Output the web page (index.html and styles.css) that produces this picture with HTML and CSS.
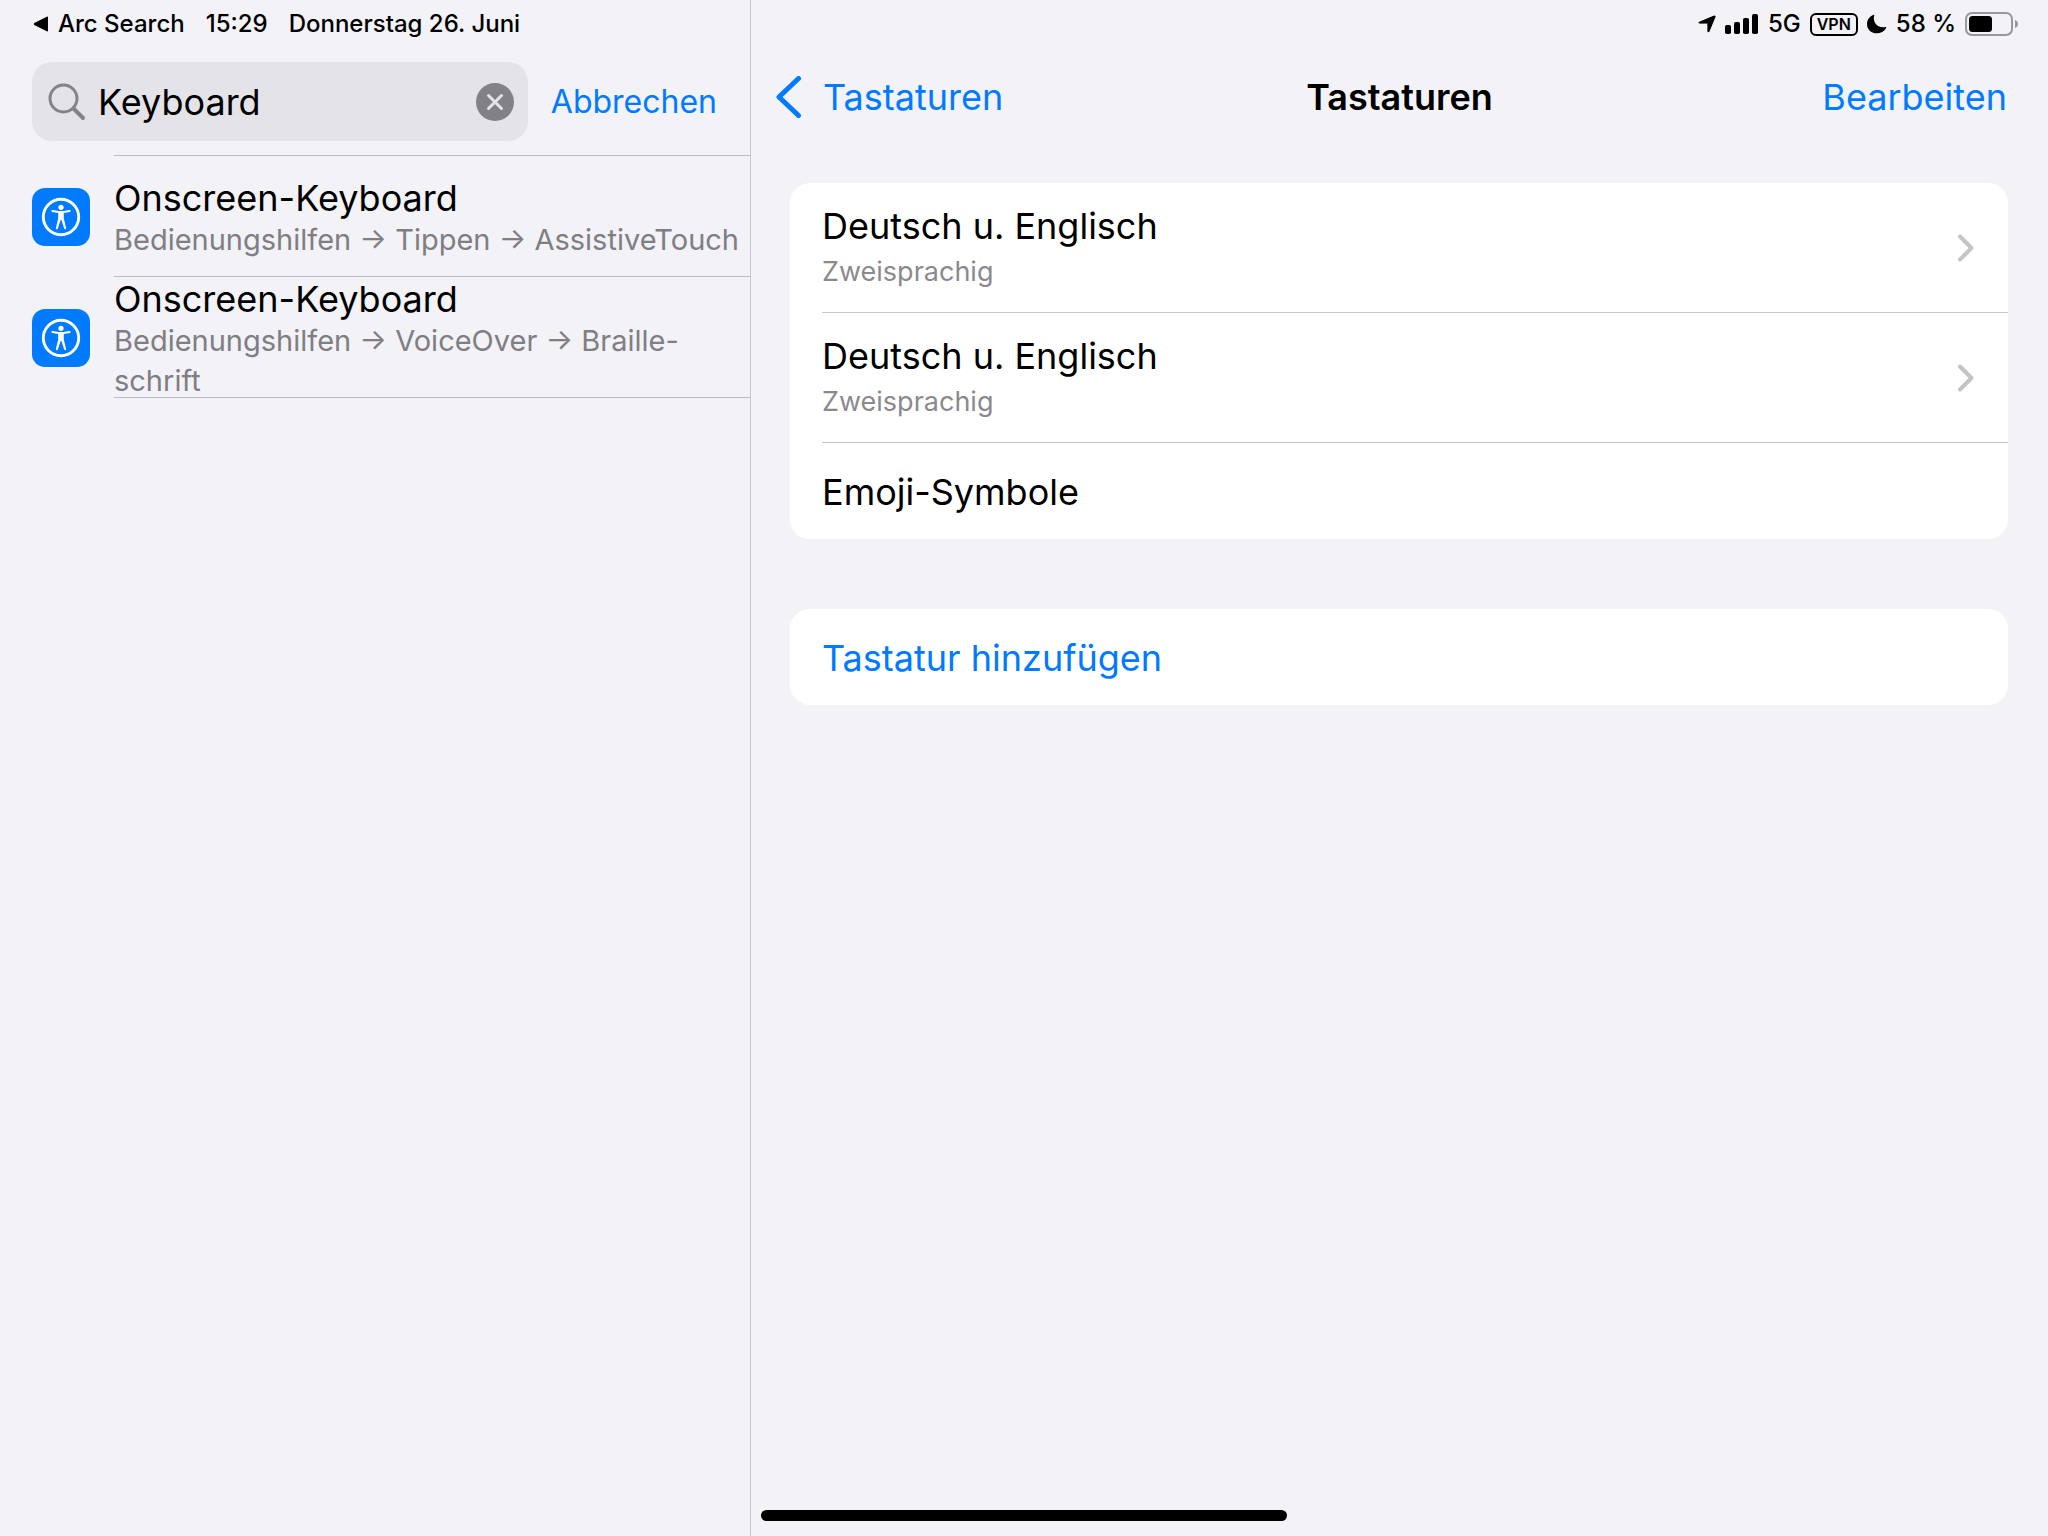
FILE: index.html
```html
<!DOCTYPE html>
<html lang="de">
<head>
  <meta charset="UTF-8">
  <meta name="viewport" content="width=device-width, initial-scale=1.0">
  <title>Tastaturen</title>
  <link rel="stylesheet" href="styles.css">
</head>
<body>
  <svg class="symbols" aria-hidden="true">
    <symbol id="icon-accessibility" viewBox="0 0 58 58">
      <circle cx="29" cy="29" r="17.7" fill="none" stroke="#fff" stroke-width="2.9"/>
      <circle cx="29" cy="19.3" r="2.6" fill="#fff"/>
      <path d="M20.4 23l6 .9q2.600.3 5.200 0l6-.9" fill="none" stroke="#fff" stroke-width="2" stroke-linecap="round"/>
      <path d="M26.200 23.500h5.600v7l2.300 9.400q.2 1.300-.8 1.400-.9.1-1.200-1l-2.700-8.400h-.8l-2.700 8.400q-.3 1.100-1.200 1-1-.1-.8-1.400l2.300-9.400z" fill="#fff"/>
    </symbol>
    <symbol id="icon-chevron" viewBox="0 0 18 28">
      <path d="M3 2.5l11.5 11.5L3 25.5" fill="none" stroke="currentColor" stroke-width="4" stroke-linecap="round" stroke-linejoin="round"/>
    </symbol>
  </svg>

  <div class="settings">
    <aside class="sidebar">
      <div class="status status-left">
        <a class="back-app" href="#"><svg class="back-triangle" viewBox="0 0 16 16" aria-hidden="true"><path d="M15 1.5v13q0 1.3-1.2.7L1.3 9Q0 8 1.3 7L13.8.8Q15 .2 15 1.5z"/></svg>Arc Search</a>
        <span>15:29</span>
        <span>Donnerstag 26. Juni</span>
      </div>

      <form class="search">
        <div class="search-field">
          <svg class="search-icon" viewBox="0 0 38 38" aria-hidden="true"><circle cx="15.5" cy="15.500" r="13.5"/><path d="M25.5 25.5l9.500 9.500"/></svg>
          <input class="search-input" type="text" value="Keyboard" aria-label="Suchen">
          <button class="clear" type="reset" aria-label="Text löschen">
            <svg viewBox="0 0 38 38" aria-hidden="true"><circle cx="19" cy="19" r="19"/><path d="M12.5 12.5l13 13M25.5 12.5l-13 13"/></svg>
          </button>
        </div>
        <button class="link-button cancel" type="button">Abbrechen</button>
      </form>

      <ul class="results">
        <li>
          <a class="result" href="#">
            <svg class="app-icon" aria-hidden="true"><use href="#icon-accessibility"/></svg>
            <span class="result-text">
              <span class="title">Onscreen-Keyboard</span>
              <span class="path">Bedienungshilfen → Tippen → AssistiveTouch</span>
            </span>
          </a>
        </li>
        <li>
          <a class="result" href="#">
            <svg class="app-icon" aria-hidden="true"><use href="#icon-accessibility"/></svg>
            <span class="result-text">
              <span class="title">Onscreen-Keyboard</span>
              <span class="path">Bedienungshilfen → VoiceOver → Braille-<br>schrift</span>
            </span>
          </a>
        </li>
      </ul>
    </aside>

    <main class="detail">
      <div class="status status-right">
        <svg class="location" viewBox="0 0 18 18" aria-hidden="true"><path d="M16 1.100Q17.600.5 17 2L11 16.400q-.8 1.500-1.100-.2V8.900q0-.8-.8-.8H1.600Q0 7.900 1.300 7.200z"/></svg>
        <svg class="signal" viewBox="0 0 34 20" aria-hidden="true"><rect x="0" y="11" width="6" height="9" rx="1.8"/><rect x="9" y="8" width="6" height="12" rx="1.8"/><rect x="18" y="4" width="6" height="16" rx="1.8"/><rect x="27" y="0" width="6" height="20" rx="1.8"/></svg>
        <span>5G</span>
        <span class="vpn">VPN</span>
        <svg class="moon" viewBox="0 0 20 20" aria-hidden="true"><path d="M6.500.8Q7.600.3 7.200 1.500C5.400 8.500 10.500 14.400 18.300 13q1.500-.3.800.9C14.500 22.500 0 20.500 0 10 0 5.800 2.800 2.200 6.500.8z"/></svg>
        <span>58 %</span>
        <svg class="battery" viewBox="0 0 54 24" aria-hidden="true"><rect x="1" y="1" width="46" height="22" rx="6" fill="none" stroke="#98979c" stroke-width="2"/><rect x="4" y="4" width="23" height="16" rx="3.5"/><path d="M50 8q3 1.200 3 4t-3 4z" fill="#98979c"/></svg>
      </div>

      <header class="navbar">
        <a class="nav-back" href="#"><svg class="nav-chevron" viewBox="0 0 26 42" aria-hidden="true"><path d="M22.5 2.500L3 21l19.500 18.500"/></svg>Tastaturen</a>
        <h1>Tastaturen</h1>
        <button class="link-button nav-edit" type="button">Bearbeiten</button>
      </header>

      <ul class="group">
        <li>
          <a class="row" href="#">
            <span class="row-text"><span class="title">Deutsch u. Englisch</span><span class="subtitle">Zweisprachig</span></span>
            <svg class="chevron" aria-hidden="true"><use href="#icon-chevron"/></svg>
          </a>
        </li>
        <li>
          <a class="row" href="#">
            <span class="row-text"><span class="title">Deutsch u. Englisch</span><span class="subtitle">Zweisprachig</span></span>
            <svg class="chevron" aria-hidden="true"><use href="#icon-chevron"/></svg>
          </a>
        </li>
        <li class="row row-single">Emoji-Symbole</li>
      </ul>

      <div class="group">
        <button class="row row-single row-action" type="button">Tastatur hinzufügen</button>
      </div>

      <div class="home-indicator"></div>
    </main>
  </div>
</body>
</html>
```

FILE: styles.css
```css
* {
  box-sizing: border-box;
}
body {
  margin: 0;
  background: #f2f2f7;
  color: #000;
  font-family: Inter, "Liberation Sans", sans-serif;
  font-size: 36px;
  line-height: 44px;
}
a {
  color: inherit;
  text-decoration: none;
}
ul {
  list-style: none;
  margin: 0;
  padding: 0;
}
button {
  padding: 0;
  border: none;
  background: none;
  font: inherit;
  cursor: pointer;
}
svg {
  display: block;
  flex: none;
}
.symbols {
  position: absolute;
  width: 0;
  height: 0;
}
.settings {
  display: grid;
  grid-template-columns: 751px 1fr;
  min-height: 100vh;
}
.sidebar {
  border-right: 1px solid #c8c7cc;
}

/* status bar */
.status {
  display: flex;
  align-items: center;
  height: 48px;
  font-size: 24px;
  font-weight: 500;
}
.status-left {
  gap: 21px;
  padding-left: 33px;
}
.back-app {
  display: flex;
  align-items: center;
  gap: 9px;
}
.back-triangle {
  width: 16px;
  height: 16px;
}
.status-right {
  justify-content: flex-end;
  gap: 9px;
  padding-right: 29px;
}
.location {
  width: 18px;
  height: 18px;
  stroke: #000;
  stroke-width: 1;
}
.signal {
  width: 34px;
  height: 20px;
}
.vpn {
  border: 2px solid #000;
  border-radius: 6px;
  padding: 0 5px;
  font-size: 16px;
  font-weight: 600;
  line-height: 19px;
}
.moon {
  width: 20px;
  height: 20px;
}
.battery {
  width: 54px;
  height: 24px;
}

/* search */
.search {
  display: flex;
  align-items: center;
  gap: 23px;
  padding: 14px 33px 14px 32px;
}
.search-field {
  display: flex;
  flex: 1;
  align-items: center;
  min-width: 0;
  height: 79px;
  padding: 0 14px 0 16px;
  border-radius: 20px;
  background: #e3e3e8;
}
.search-icon {
  width: 38px;
  height: 38px;
  fill: none;
  stroke: #848389;
  stroke-width: 3;
  stroke-linecap: round;
}
.search-icon path {
  stroke-width: 4;
}
.search-input {
  flex: 1;
  min-width: 0;
  margin-left: 12px;
  padding: 0;
  border: none;
  outline: none;
  background: none;
  font: inherit;
}
.clear svg {
  width: 38px;
  height: 38px;
  fill: #828187;
}
.clear path {
  stroke: #e3e3e8;
  stroke-width: 3;
  stroke-linecap: round;
}
.link-button {
  color: #007aff;
}
.cancel {
  font-size: 32px;
}

/* search results */
.results::before {
  content: "";
  display: block;
  height: 1px;
  margin-left: 114px;
  background: #bcbbc0;
}
.result {
  display: flex;
  align-items: center;
  gap: 24px;
  padding-left: 32px;
}
.app-icon {
  width: 58px;
  height: 58px;
  border-radius: 13px;
  background: #007aff;
}
.result-text {
  display: flex;
  flex: 1;
  flex-direction: column;
  justify-content: center;
  height: 121px;
  padding-top: 4px;
  border-bottom: 1px solid #bcbbc0;
}
.path {
  color: #7f7e83;
  font-size: 29px;
  line-height: 40px;
  white-space: nowrap;
}

/* detail pane */
.detail {
  display: flex;
  flex-direction: column;
}
.navbar {
  display: grid;
  grid-template-columns: 1fr auto 1fr;
  align-items: center;
  height: 98px;
  margin-bottom: 37px;
  padding: 0 25px;
}
.nav-back {
  display: flex;
  align-items: center;
  gap: 21px;
  color: #007aff;
}
.nav-chevron {
  width: 26px;
  height: 42px;
  fill: none;
  stroke: #007aff;
  stroke-width: 5;
  stroke-linecap: round;
  stroke-linejoin: round;
}
.navbar h1 {
  margin: 0;
  font-size: 36px;
  font-weight: 600;
}
.nav-edit {
  justify-self: end;
  margin-right: 16px;
}
.group {
  margin: 0 40px 70px 39px;
  border-radius: 20px;
  background: #fff;
}
.row {
  display: flex;
  align-items: center;
  width: 100%;
  padding-left: 32px;
}
.group a.row {
  position: relative;
  height: 130px;
  padding-right: 33px;
}
.group a.row::after {
  content: "";
  position: absolute;
  right: 0;
  bottom: 0;
  left: 32px;
  height: 1px;
  background: #c6c5c9;
}
.row-text {
  display: flex;
  flex: 1;
  flex-direction: column;
  gap: 4px;
}
.subtitle {
  color: #8a8a8e;
  font-size: 27px;
  line-height: 40px;
}
.chevron {
  width: 18px;
  height: 28px;
  color: #c4c4c6;
}
.row-single {
  height: 96px;
  padding-top: 2px;
}
.row-action {
  color: #007aff;
}
.home-indicator {
  width: 526px;
  height: 11px;
  margin: auto 0 15px 10px;
  border-radius: 6px;
  background: #000;
}
```
